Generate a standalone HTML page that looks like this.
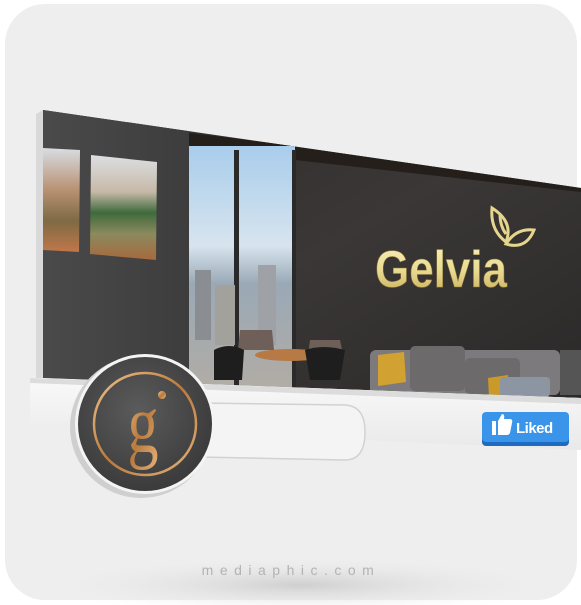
<!DOCTYPE html>
<html><head><meta charset="utf-8"><style>
html,body{margin:0;padding:0;background:#fff;width:581px;height:605px;overflow:hidden}
</style></head><body>
<svg width="581" height="605" viewBox="0 0 581 605" xmlns="http://www.w3.org/2000/svg" style="display:block">
<defs>
<linearGradient id="wall" x1="0" y1="0" x2="1" y2="0"><stop offset="0" stop-color="#4a4a4b"/><stop offset="1" stop-color="#3d3d3e"/></linearGradient>
<linearGradient id="rwall" x1="0" y1="0" x2="1" y2="1"><stop offset="0" stop-color="#2e2b2b"/><stop offset="0.5" stop-color="#3a3736"/><stop offset="1" stop-color="#2a2828"/></linearGradient>
<linearGradient id="sky" x1="0" y1="0" x2="0" y2="1"><stop offset="0" stop-color="#a9cdec"/><stop offset="0.4" stop-color="#d7e4ee"/><stop offset="0.55" stop-color="#9aa9b6"/><stop offset="1" stop-color="#b3aca4"/></linearGradient>
<linearGradient id="gold" x1="0" y1="0" x2="0" y2="1"><stop offset="0" stop-color="#f8efbe"/><stop offset="0.5" stop-color="#eadb92"/><stop offset="1" stop-color="#c3a853"/></linearGradient>
<linearGradient id="cgold" x1="0" y1="0" x2="1" y2="1"><stop offset="0" stop-color="#f0c48a"/><stop offset="0.5" stop-color="#b97a3c"/><stop offset="1" stop-color="#e6b27a"/></linearGradient>
<radialGradient id="disc" cx="0.45" cy="0.4" r="0.7"><stop offset="0" stop-color="#5b5b5c"/><stop offset="1" stop-color="#363637"/></radialGradient>
<linearGradient id="bar" x1="0" y1="0" x2="0" y2="1"><stop offset="0" stop-color="#f9f9f9"/><stop offset="1" stop-color="#e9e9e9"/></linearGradient>
<radialGradient id="shadow" cx="0.5" cy="0.5" r="0.5"><stop offset="0" stop-color="#cfcfcf"/><stop offset="1" stop-color="#eeeeee" stop-opacity="0"/></radialGradient>
<linearGradient id="pic1" x1="0" y1="0" x2="0" y2="1"><stop offset="0" stop-color="#d8dde2"/><stop offset="0.4" stop-color="#b99273"/><stop offset="0.7" stop-color="#7e6a44"/><stop offset="1" stop-color="#c1774a"/></linearGradient>
<linearGradient id="pic2" x1="0" y1="0" x2="0" y2="1"><stop offset="0" stop-color="#dcdfe3"/><stop offset="0.35" stop-color="#c7b9a8"/><stop offset="0.55" stop-color="#3e6a3c"/><stop offset="0.75" stop-color="#8b8a5e"/><stop offset="1" stop-color="#a7693d"/></linearGradient>
<clipPath id="cover"><polygon points="43,110 581,188 581,398 43,378"/></clipPath>
</defs>
<rect x="5" y="4" width="572" height="596" rx="40" fill="#eeeeee"/>
<ellipse cx="300" cy="585" rx="260" ry="28" fill="url(#shadow)"/>
<polygon points="36,114 43,110 43,378 36,380" fill="#d9d9d9"/>
<g clip-path="url(#cover)">
 <rect x="43" y="100" width="540" height="310" fill="url(#rwall)"/>
 <rect x="43" y="100" width="146" height="300" fill="url(#wall)"/>
 <polygon points="189,133 581,180 581,192 295,160 189,148" fill="#251f1c"/>
 <rect x="189" y="146" width="106" height="250" fill="url(#sky)"/>
 <rect x="234" y="150" width="5" height="240" fill="#2a2a2a"/>
 <rect x="292" y="150" width="4" height="240" fill="#2a2a2a"/>
 <rect x="195" y="270" width="16" height="70" fill="#8a8d92"/>
 <rect x="258" y="265" width="18" height="80" fill="#9ea2a6"/>
 <rect x="215" y="285" width="20" height="60" fill="#a3a19c"/>
 <polygon points="43,148 80,150 79,252 43,250" fill="url(#pic1)"/>
 <polygon points="91,155 157,162 156,260 90,254" fill="url(#pic2)"/>
 <ellipse cx="290" cy="355" rx="35" ry="6" fill="#b77a45"/>
 <path d="M240,330 h32 l2,20 h-36z" fill="#6e5f59"/>
 <path d="M310,340 h30 l3,15 h-35z" fill="#6e5f59"/>
 <path d="M214,350 q15,-8 30,0 l-2,30 h-28z" fill="#1e1e1e"/>
 <path d="M305,350 q18,-6 40,0 l-5,30 h-30z" fill="#1e1e1e"/>
 <rect x="370" y="350" width="190" height="45" rx="6" fill="#7c7a7c"/>
 <rect x="410" y="346" width="55" height="45" rx="5" fill="#6d6a6c"/>
 <rect x="465" y="358" width="55" height="36" rx="5" fill="#6d6a6c"/>
 <path d="M378,355 l26,-3 l2,30 l-28,4z" fill="#d1a231"/>
 <path d="M488,378 l20,-3 l1,20 l-20,2z" fill="#c99a2a"/>
 <rect x="500" y="377" width="50" height="20" rx="4" fill="#8c96a2"/>
 <rect x="560" y="350" width="25" height="45" fill="#555"/>
 <text x="375" y="287" font-family="Liberation Sans, sans-serif" font-size="52" font-weight="bold" fill="url(#gold)" stroke="#8a7534" stroke-width="0.6" textLength="132" lengthAdjust="spacingAndGlyphs">Gelvia</text>
 <g fill="none" stroke="#e6d58c" stroke-width="3">
  <path d="M492,208 q-2,22 14,34 q8,-20 -14,-34z"/>
  <path d="M506,244 q10,-16 28,-14 q-8,20 -28,14z"/>
  <path d="M500,214 q0,12 6,20"/>
 </g>
</g>
<polygon points="30,378 43,378 581,398 581,450 30,425" fill="url(#bar)"/>
<polygon points="30,378 581,398 581,404 30,383" fill="#dcdcdc"/>
<path d="M200,403 L345,405 Q365,406 365,432 Q365,460 345,460 L200,457 Z" fill="#f4f4f4" stroke="#d2d2d2" stroke-width="1.5"/>
<rect x="482" y="416" width="87" height="30" rx="4" fill="#1d6cc0"/>
<rect x="482" y="412" width="87" height="30" rx="4" fill="#3a94ea"/>
<path d="M492,421 h4 v14 h-4z M498,421 l4,-7 q3,0 2,5 h6 q3,0 2,4 l-2,10 q-1,2 -3,2 h-9z" fill="#fff"/>
<text x="516" y="433" font-family="Liberation Sans, sans-serif" font-weight="bold" font-size="15" fill="#fff" letter-spacing="-0.5">Liked</text>
<circle cx="141" cy="427" r="71" fill="#cfcfcf"/>
<circle cx="145" cy="424" r="70" fill="#f4f4f4"/>
<circle cx="145" cy="424" r="67" fill="url(#disc)"/>
<circle cx="145" cy="424" r="51" fill="none" stroke="url(#cgold)" stroke-width="2.5"/>
<text x="143" y="452" text-anchor="middle" font-family="Liberation Serif, serif" font-size="62" fill="url(#cgold)" transform="translate(143 452) scale(1 1.35) translate(-143 -452)">g</text>
<circle cx="162" cy="395" r="4" fill="url(#cgold)"/>
<text x="291" y="575" text-anchor="middle" font-family="Liberation Sans, sans-serif" font-size="14" fill="#b3b3b3" letter-spacing="6.5">mediaphic.com</text>
</svg>
</body></html>
